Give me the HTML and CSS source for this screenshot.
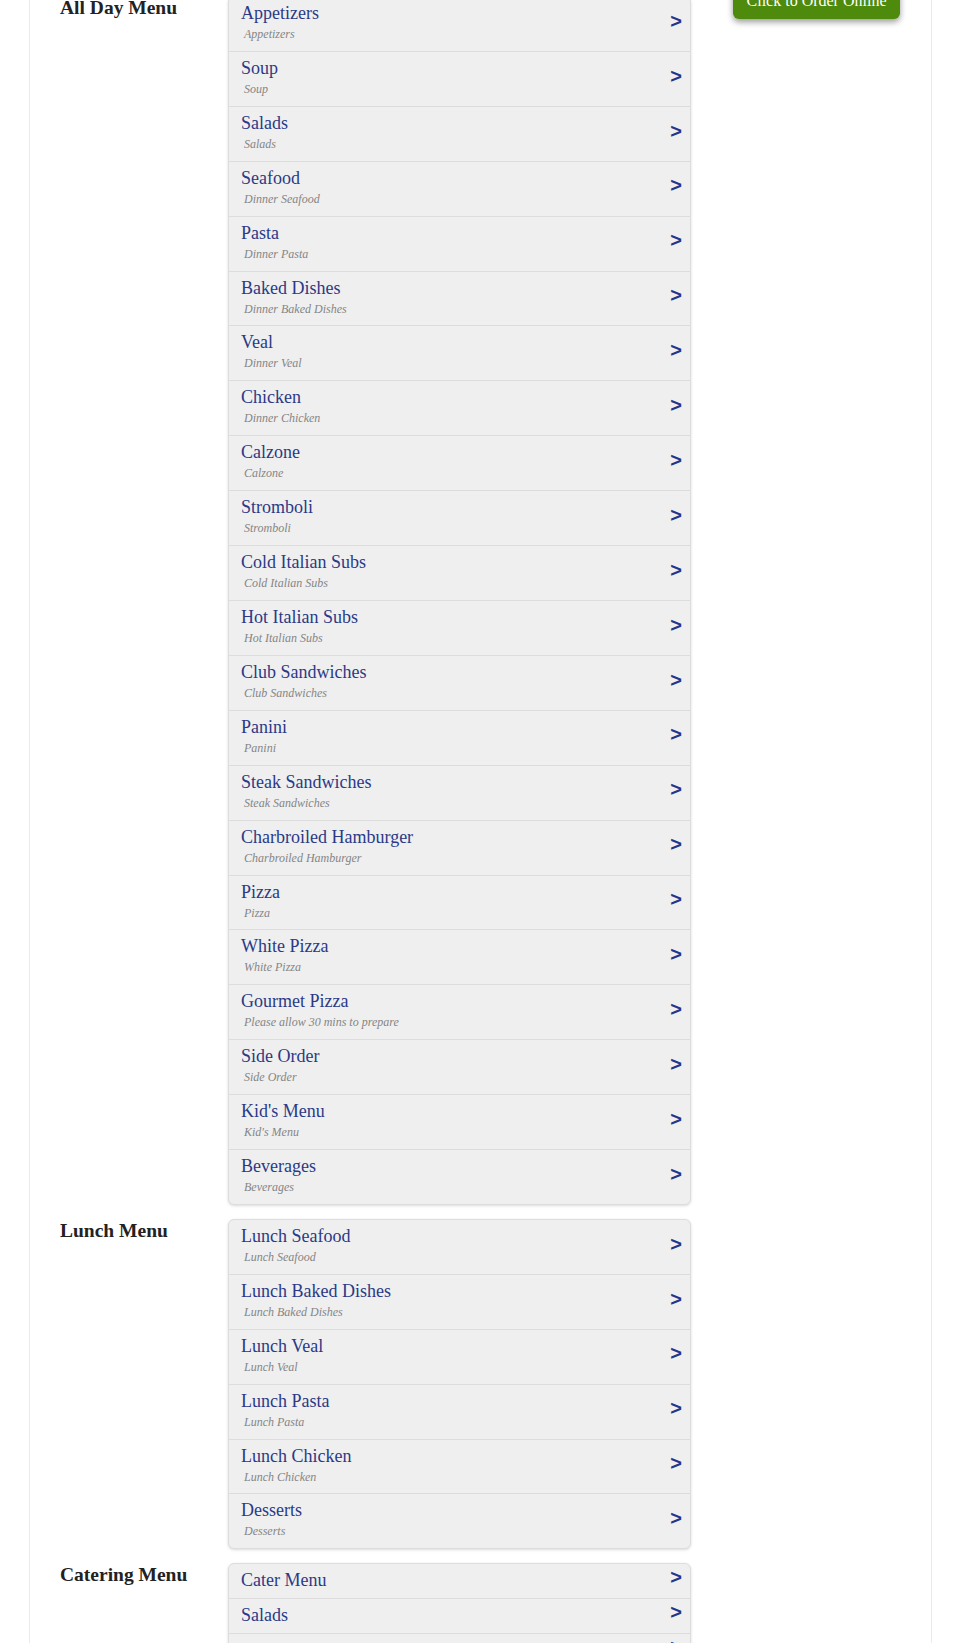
FILE: index.html
```html
<!DOCTYPE html>
<html lang="en">
<head>
<meta charset="utf-8">
<title>Menu</title>
<link rel="stylesheet" href="styles.css">
</head>
<body>
<div class="page">
  <div class="columns">
    <div class="main">
      <section class="menu-section">
        <h2 class="menu-title">All Day Menu</h2>
        <ul class="cat-list">
          <li class="cat"><div class="cat-text"><div class="cat-name">Appetizers</div><div class="cat-desc">Appetizers</div></div><span class="arrow">&gt;</span></li>
          <li class="cat"><div class="cat-text"><div class="cat-name">Soup</div><div class="cat-desc">Soup</div></div><span class="arrow">&gt;</span></li>
          <li class="cat"><div class="cat-text"><div class="cat-name">Salads</div><div class="cat-desc">Salads</div></div><span class="arrow">&gt;</span></li>
          <li class="cat"><div class="cat-text"><div class="cat-name">Seafood</div><div class="cat-desc">Dinner Seafood</div></div><span class="arrow">&gt;</span></li>
          <li class="cat"><div class="cat-text"><div class="cat-name">Pasta</div><div class="cat-desc">Dinner Pasta</div></div><span class="arrow">&gt;</span></li>
          <li class="cat"><div class="cat-text"><div class="cat-name">Baked Dishes</div><div class="cat-desc">Dinner Baked Dishes</div></div><span class="arrow">&gt;</span></li>
          <li class="cat"><div class="cat-text"><div class="cat-name">Veal</div><div class="cat-desc">Dinner Veal</div></div><span class="arrow">&gt;</span></li>
          <li class="cat"><div class="cat-text"><div class="cat-name">Chicken</div><div class="cat-desc">Dinner Chicken</div></div><span class="arrow">&gt;</span></li>
          <li class="cat"><div class="cat-text"><div class="cat-name">Calzone</div><div class="cat-desc">Calzone</div></div><span class="arrow">&gt;</span></li>
          <li class="cat"><div class="cat-text"><div class="cat-name">Stromboli</div><div class="cat-desc">Stromboli</div></div><span class="arrow">&gt;</span></li>
          <li class="cat"><div class="cat-text"><div class="cat-name">Cold Italian Subs</div><div class="cat-desc">Cold Italian Subs</div></div><span class="arrow">&gt;</span></li>
          <li class="cat"><div class="cat-text"><div class="cat-name">Hot Italian Subs</div><div class="cat-desc">Hot Italian Subs</div></div><span class="arrow">&gt;</span></li>
          <li class="cat"><div class="cat-text"><div class="cat-name">Club Sandwiches</div><div class="cat-desc">Club Sandwiches</div></div><span class="arrow">&gt;</span></li>
          <li class="cat"><div class="cat-text"><div class="cat-name">Panini</div><div class="cat-desc">Panini</div></div><span class="arrow">&gt;</span></li>
          <li class="cat"><div class="cat-text"><div class="cat-name">Steak Sandwiches</div><div class="cat-desc">Steak Sandwiches</div></div><span class="arrow">&gt;</span></li>
          <li class="cat"><div class="cat-text"><div class="cat-name">Charbroiled Hamburger</div><div class="cat-desc">Charbroiled Hamburger</div></div><span class="arrow">&gt;</span></li>
          <li class="cat"><div class="cat-text"><div class="cat-name">Pizza</div><div class="cat-desc">Pizza</div></div><span class="arrow">&gt;</span></li>
          <li class="cat"><div class="cat-text"><div class="cat-name">White Pizza</div><div class="cat-desc">White Pizza</div></div><span class="arrow">&gt;</span></li>
          <li class="cat"><div class="cat-text"><div class="cat-name">Gourmet Pizza</div><div class="cat-desc">Please allow 30 mins to prepare</div></div><span class="arrow">&gt;</span></li>
          <li class="cat"><div class="cat-text"><div class="cat-name">Side Order</div><div class="cat-desc">Side Order</div></div><span class="arrow">&gt;</span></li>
          <li class="cat"><div class="cat-text"><div class="cat-name">Kid's Menu</div><div class="cat-desc">Kid's Menu</div></div><span class="arrow">&gt;</span></li>
          <li class="cat"><div class="cat-text"><div class="cat-name">Beverages</div><div class="cat-desc">Beverages</div></div><span class="arrow">&gt;</span></li>
        </ul>
      </section>
      <section class="menu-section">
        <h2 class="menu-title">Lunch Menu</h2>
        <ul class="cat-list">
          <li class="cat"><div class="cat-text"><div class="cat-name">Lunch Seafood</div><div class="cat-desc">Lunch Seafood</div></div><span class="arrow">&gt;</span></li>
          <li class="cat"><div class="cat-text"><div class="cat-name">Lunch Baked Dishes</div><div class="cat-desc">Lunch Baked Dishes</div></div><span class="arrow">&gt;</span></li>
          <li class="cat"><div class="cat-text"><div class="cat-name">Lunch Veal</div><div class="cat-desc">Lunch Veal</div></div><span class="arrow">&gt;</span></li>
          <li class="cat"><div class="cat-text"><div class="cat-name">Lunch Pasta</div><div class="cat-desc">Lunch Pasta</div></div><span class="arrow">&gt;</span></li>
          <li class="cat"><div class="cat-text"><div class="cat-name">Lunch Chicken</div><div class="cat-desc">Lunch Chicken</div></div><span class="arrow">&gt;</span></li>
          <li class="cat"><div class="cat-text"><div class="cat-name">Desserts</div><div class="cat-desc">Desserts</div></div><span class="arrow">&gt;</span></li>
        </ul>
      </section>
      <section class="menu-section">
        <h2 class="menu-title">Catering Menu</h2>
        <ul class="cat-list cat-list--simple">
          <li class="cat"><div class="cat-text"><div class="cat-name">Cater Menu</div></div><span class="arrow">&gt;</span></li>
          <li class="cat"><div class="cat-text"><div class="cat-name">Salads</div></div><span class="arrow">&gt;</span></li>
          <li class="cat"><div class="cat-text"><div class="cat-name">Trays</div></div><span class="arrow">&gt;</span></li>
          <li class="cat"><div class="cat-text"><div class="cat-name">Desserts</div></div><span class="arrow">&gt;</span></li>
        </ul>
      </section>
    </div>
    <aside class="aside">
      <a class="order-btn" href="#">Click to Order Online</a>
    </aside>
  </div>
</div>
</body>
</html>
```

FILE: styles.css
```css
* {
  box-sizing: border-box;
}

html, body {
  margin: 0;
  padding: 0;
  background: #ffffff;
}

body {
  font-family: "Liberation Serif", "Times New Roman", serif;
  color: #222222;
}

.page {
  width: 903px;
  margin: -20px 0 0 29px;
  padding: 0 30px 40px 30px;
  border-left: 1px solid #eaeaea;
  border-right: 1px solid #eaeaea;
  background: #ffffff;
}

.columns {
  display: flex;
  align-items: flex-start;
}

.main {
  width: 631px;
  padding-top: 16px;
  display: flex;
  flex-direction: column;
  gap: 14px;
}

.menu-section {
  display: flex;
  align-items: flex-start;
}

.menu-title {
  width: 168px;
  flex: none;
  margin: 0;
  padding-top: 1px;
  font-size: 19.5px;
  font-weight: bold;
  line-height: normal;
  color: #222222;
}

.cat-list {
  width: 463px;
  flex: none;
  margin: 0;
  padding: 0;
  list-style: none;
  background: #efefef;
  border: 1px solid #dddddd;
  border-radius: 6px;
  box-shadow: 0 1px 3px rgba(0, 0, 0, 0.15);
}

.cat {
  display: flex;
  align-items: center;
  justify-content: space-between;
  padding: 5px 8px 5.5px 12px;
  border-top: 1px solid #dcdcdc;
}

.cat-list--simple .cat {
  padding-bottom: 7px;
}

.cat:first-child {
  border-top: none;
}

.cat-name {
  font-size: 18px;
  line-height: 22px;
  color: #2b3a86;
}

.cat-desc {
  font-size: 12px;
  line-height: 21.4px;
  font-style: italic;
  color: #858585;
  padding-left: 3px;
}

.arrow {
  font-family: "Liberation Sans", Arial, sans-serif;
  font-weight: bold;
  font-size: 20px;
  line-height: 16px;
  color: #24358a;
  margin-bottom: 6px;
}

.aside {
  margin-left: 42px;
  width: 167px;
  flex: none;
}

.order-btn {
  display: block;
  padding: 11px 0 8px;
  text-align: center;
  font-size: 16px;
  line-height: 20px;
  color: #ffffff;
  text-decoration: none;
  background: #4e8a0c;
  border-radius: 6px;
  box-shadow: 0 3px 6px rgba(0, 0, 0, 0.4);
}
```
